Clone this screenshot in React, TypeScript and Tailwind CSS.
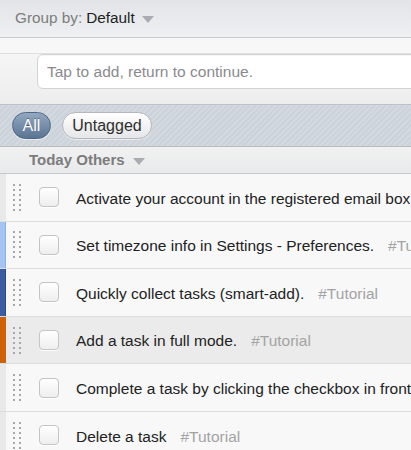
import React from "react";

const rows = [
  { text: "Activate your account in the registered email box", tag: "", strip: "bg-[#e9e9e9]", bg: "bg-[#f8f8f9]" },
  { text: "Set timezone info in Settings - Preferences.", tag: "#Tutorial", strip: "bg-[#a6c4f3] border-r border-[#8fb0e4]", bg: "bg-[#f8f8f9]" },
  { text: "Quickly collect tasks (smart-add).", tag: "#Tutorial", strip: "bg-[#3b5ca2] border-r border-[#2c4a8a]", bg: "bg-[#f8f8f9]" },
  { text: "Add a task in full mode.", tag: "#Tutorial", strip: "bg-[#cf6207]", bg: "bg-[#ebebeb]" },
  { text: "Complete a task by clicking the checkbox in front of it", tag: "", strip: "bg-[#e9e9e9]", bg: "bg-[#f8f8f9]" },
  { text: "Delete a task", tag: "#Tutorial", strip: "bg-[#e9e9e9]", bg: "bg-[#f8f8f9]" },
];

function Handle() {
  return (
    <div className="grid grid-cols-2 gap-x-[4px] gap-y-[3px] w-[8px]">
      {Array.from({ length: 12 }).map((_, i) => (
        <div key={i} className="w-[2px] h-[2px] bg-[#a8a8a8]" />
      ))}
    </div>
  );
}

function Caret() {
  return (
    <svg width="12" height="7" viewBox="0 0 12 7" className="inline-block">
      <path d="M0 0 L12 0 L6 7 Z" fill="#a9adb3" />
    </svg>
  );
}

export default function App() {
  return (
    <div
      className="w-[411px] h-[450px] overflow-hidden bg-[#f8f8f9] text-[15.5px]"
      style={{ fontFamily: '"Liberation Sans", Arial, sans-serif' }}
    >
      {/* Header */}
      <div className="h-[38px] flex items-center pl-[15px] text-[15.3px] bg-gradient-to-b from-[#e2e4e7] to-[#eef0f2] border-b border-[#c9cbce]">
        <span className="text-[#7d7d7d]">Group by:</span>
        <span className="text-[#1e1e1e] ml-[4px]">Default</span>
        <span className="ml-[7px] flex items-center pt-[1px]"><Caret /></span>
      </div>

      {/* Input area */}
      <div className="h-[67px] bg-gradient-to-b from-[#f8f8f8] to-[#ededee] border-b border-[#bfc2c6] overflow-hidden">
        <div className="h-[16px] border-b border-[#dedfe1] bg-[#f7f7f8]" />
        <div className="pl-[37px] pt-0">
          <div className="w-[500px] h-[35px] bg-white border border-[#d2d3d5] rounded-[6px] flex items-center pl-[9px] text-[#8a8a8e] shadow-[inset_0_1px_1px_rgba(0,0,0,0.04)]">
            Tap to add, return to continue.
          </div>
        </div>
      </div>

      {/* Tag bar */}
      <div className="h-[42px] flex items-center gap-[11px] pl-[12px] border-b border-[#b9bdc3] bg-[#ccd2da] bg-[repeating-linear-gradient(135deg,#ccd2da_0px,#ccd2da_2px,#d4d9df_2px,#d4d9df_4px)]">
        <div className="h-[27px] w-[39px] rounded-full flex items-center justify-center text-[16px] text-white border border-[#4f6886] bg-gradient-to-b from-[#93a8c0] to-[#5a7594] [text-shadow:0_-1px_0_rgba(0,0,0,0.35)] shadow-[0_1px_0_rgba(255,255,255,0.5)]">
          All
        </div>
        <div className="h-[27px] w-[90px] rounded-full flex items-center justify-center text-[16px] text-[#2e2e2e] border border-[#b4b7bb] bg-gradient-to-b from-[#ffffff] to-[#e5e6e8] shadow-[0_1px_0_rgba(255,255,255,0.5)]">
          Untagged
        </div>
      </div>

      {/* Section header */}
      <div className="h-[27px] flex items-center pl-[29px] bg-gradient-to-b from-[#f1f1f2] to-[#e9eaeb] border-b border-[#c8c9cb]">
        <span className="font-bold text-[#7c7c7c] text-[15px]">Today Others</span>
        <span className="ml-[8px] flex items-center pt-[2px]"><Caret /></span>
      </div>

      {/* Rows */}
      {rows.map((r, i) => (
        <div key={i} className={`h-[47.6px] flex items-stretch border-b border-[#dcdddf] ${r.bg}`}>
          <div className={`w-[6px] shrink-0 ${r.strip}`} />
          <div className="w-[7px] shrink-0" />
          <div className="flex items-center shrink-0">
            <Handle />
          </div>
          <div className="flex items-center shrink-0 ml-[18px]">
            <div className="w-[20px] h-[20px] rounded-[4px] border border-[#c4c5c8] bg-gradient-to-b from-[#ffffff] to-[#eeeeef] shadow-[0_1px_0_rgba(255,255,255,0.8)]" />
          </div>
          <div className="flex items-center ml-[17px] pt-[2px] whitespace-nowrap">
            <span className="text-[#222]">{r.text}</span>
            {r.tag && <span className="ml-[14px] text-[#a3a3a3]">{r.tag}</span>}
          </div>
        </div>
      ))}
    </div>
  );
}
